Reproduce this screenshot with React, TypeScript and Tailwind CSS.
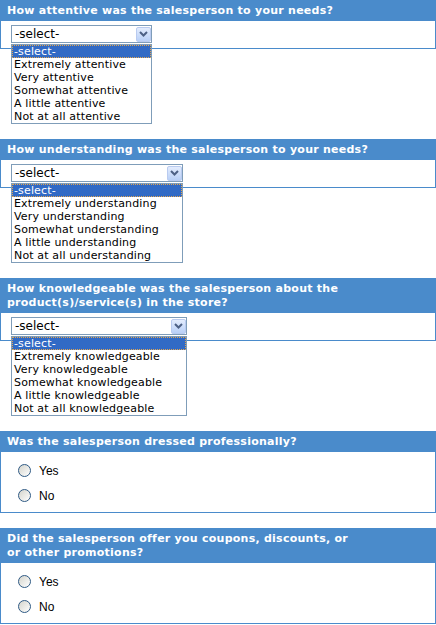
import React from 'react'

const questions = [
  {
    title: ['How attentive was the salesperson to your needs?'],
    width: 'w-[141px]',
    options: ['Extremely attentive', 'Very attentive', 'Somewhat attentive', 'A little attentive', 'Not at all attentive'],
  },
  {
    title: ['How understanding was the salesperson to your needs?'],
    width: 'w-[172px]',
    options: ['Extremely understanding', 'Very understanding', 'Somewhat understanding', 'A little understanding', 'Not at all understanding'],
  },
  {
    title: ['How knowledgeable was the salesperson about the', 'product(s)/service(s) in the store?'],
    width: 'w-[176px]',
    options: ['Extremely knowledgeable', 'Very knowledgeable', 'Somewhat knowledgeable', 'A little knowledgeable', 'Not at all knowledgeable'],
  },
]

const yesNo = [
  { title: ['Was the salesperson dressed professionally?'] },
  { title: ['Did the salesperson offer you coupons, discounts, or', 'or other promotions?'] },
]

function Header({ lines }: { lines: string[] }) {
  return (
    <div
      className={`bg-[#4a8bcb] text-white font-bold text-[11px] leading-[14px] tracking-[0.25px] pl-[7px] whitespace-nowrap ${
        lines.length > 1 ? 'pt-[4px] pb-[3px]' : 'h-[21px] flex items-center'
      }`}
    >
      <div>
        {lines.map((l, i) => (
          <div key={i}>{l}</div>
        ))}
      </div>
    </div>
  )
}

function Chevron() {
  return (
    <svg width="9" height="6" viewBox="0 0 9 6">
      <path d="M1 1 L4.5 4.5 L8 1" fill="none" stroke="#4d6185" strokeWidth="2" />
    </svg>
  )
}

function SelectQuestion({ title, width, options }: { title: string[]; width: string; options: string[] }) {
  return (
    <div className="mb-[15px]">
      <Header lines={title} />
      <div className="h-[28px] border-x border-b border-[#4a8bcb] pt-[4px] pl-[10px]">
        <div className={`${width} h-[18px] border border-[#7f9db9] bg-white flex items-center justify-between`}>
          <span className="pl-[3px] text-[12px] leading-[14px] text-black">-select-</span>
          <div className="w-[15px] h-[15px] rounded-[2px] border border-[#b9cbf0] bg-linear-to-b from-[#e3ecfd] to-[#b9d0f7] flex items-center justify-center">
            <Chevron />
          </div>
        </div>
      </div>
      <div className={`${width} -mt-[5px] ml-[11px] relative border border-[#7f9db9] bg-white text-[11px] tracking-[0.15px] text-black`}>
        <div className="h-[13px] leading-[11px] bg-[#316ac5] text-white border border-dotted border-[#e2a550] pl-[1px]">
          -select-
        </div>
        {options.map((o) => (
          <div key={o} className="h-[13px] leading-[13px] pl-[2px]">
            {o}
          </div>
        ))}
      </div>
    </div>
  )
}

function Radio({ label }: { label: string }) {
  return (
    <div className="flex items-center h-[13px] gap-[8px]">
      <div className="w-[13px] h-[13px] rounded-full border border-[#2f5a84] bg-linear-to-br from-[#d4d4cc] to-white" />
      <span className="text-[12px] text-black" style={{ fontFamily: '"Liberation Sans", Arial, sans-serif' }}>
        {label}
      </span>
    </div>
  )
}

function YesNoQuestion({ title }: { title: string[] }) {
  return (
    <div className="mb-[15px]">
      <Header lines={title} />
      <div className="h-[61px] border-x border-b border-[#4a8bcb] pl-[17px] pt-[12px] flex flex-col gap-[12px]">
        <Radio label="Yes" />
        <Radio label="No" />
      </div>
    </div>
  )
}

export default function App() {
  return (
    <div className="w-[436px] bg-white" style={{ fontFamily: '"DejaVu Sans", Verdana, sans-serif' }}>
      {questions.map((q, i) => (
        <SelectQuestion key={i} title={q.title} width={q.width} options={q.options} />
      ))}
      {yesNo.map((q, i) => (
        <YesNoQuestion key={i} title={q.title} />
      ))}
    </div>
  )
}
